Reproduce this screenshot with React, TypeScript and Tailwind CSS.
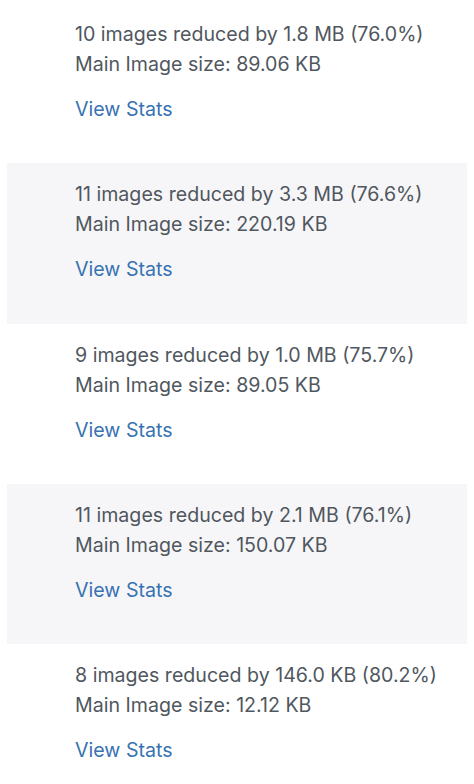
import React from "react";

const rows = [
  { line: "10 images reduced by 1.8 MB (76.0%)", size: "89.06 KB" },
  { line: "11 images reduced by 3.3 MB (76.6%)", size: "220.19 KB" },
  { line: "9 images reduced by 1.0 MB (75.7%)", size: "89.05 KB" },
  { line: "11 images reduced by 2.1 MB (76.1%)", size: "150.07 KB" },
  { line: "8 images reduced by 146.0 KB (80.2%)", size: "12.12 KB" },
];

export default function App() {
  return (
    <div
      className="w-[474px] h-[784px] overflow-hidden bg-white pt-[3px] px-[7px]"
      style={{ fontFamily: "Inter, 'Liberation Sans', sans-serif" }}
    >
      {rows.map((r, i) => (
        <div
          key={i}
          className={`h-[160.25px] pl-[68px] pt-[16px] ${i % 2 === 1 ? "bg-[#f6f6f8]" : "bg-white"}`}
        >
          <div className="text-[19.6px] leading-[30px] text-[#50575e]">{r.line}</div>
          <div className="text-[19.6px] leading-[30px] text-[#50575e]">Main Image size: {r.size}</div>
          <div className="mt-[15px] text-[19.6px] leading-[30px] text-[#3872b2]">View Stats</div>
        </div>
      ))}
    </div>
  );
}
